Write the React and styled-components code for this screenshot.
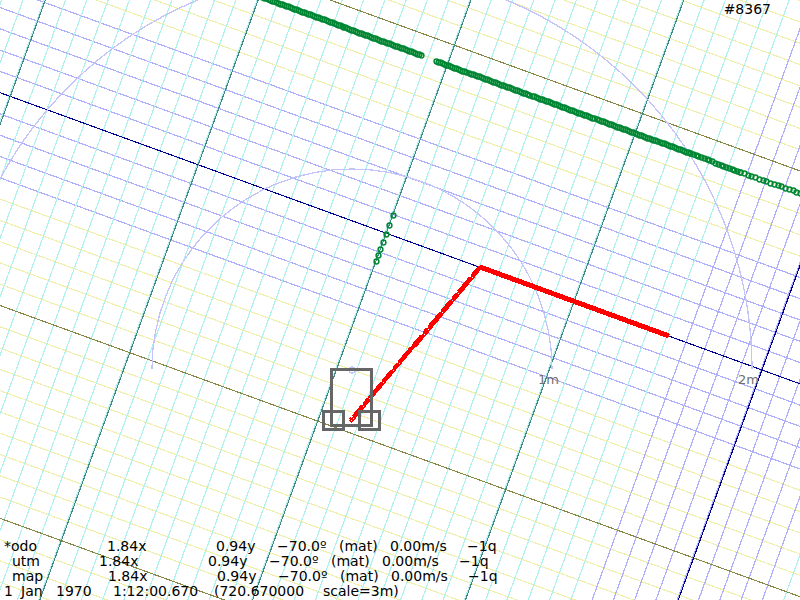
import React from "react";
import styled, { createGlobalStyle } from "styled-components";

const GlobalStyle = createGlobalStyle`
  body {
    margin: 0;
    background: #ffffff;
    overflow: hidden;
  }
`;

const Viewport = styled.main`
  position: relative;
  min-height: 100vh;
  display: flex;
  flex-direction: column;
  justify-content: space-between;
  overflow: hidden;
  color: #000000;
  font-family: "DejaVu Sans", sans-serif;
  font-size: 14px;
  line-height: 15px;
`;

const MapCanvas = styled.svg`
  position: absolute;
  top: 0;
  left: 0;
  width: 800px;
  height: 600px;
`;

const ScaleLabel = styled.text`
  font-size: 13px;
  fill: #707070;
`;

const FrameCounter = styled.header`
  position: relative;
  align-self: flex-end;
  padding: 2px 29px 0 0;
`;

const StatusPanel = styled.footer`
  position: relative;
  padding: 0 0 1px 4px;
`;

const PoseRow = styled.div`
  display: grid;
  grid-template-columns: ${(p) => p.$lead}px 109px 61px 62px 51px 77px auto;
  justify-content: start;
  white-space: nowrap;
`;

const Frame = styled.span`
  padding-left: ${(p) => (p.$active ? 0 : 8)}px;
`;

const Clock = styled.div`
  display: grid;
  grid-template-columns: 17px 35px 57px 101px 109px auto;
  justify-content: start;
  white-space: nowrap;
`;

const ORIGIN = { x: 762, y: 370 };
const STEP = 20;
const range = (from, to) => Array.from({ length: to - from + 1 }, (_, i) => from + i);

const rowColor = (i) => (i >= -5 && i <= 4 ? "#b0b0fa" : "#efefb0");
const columnColor = (i) => (Math.abs(i) <= 4 ? "#b0b0fa" : "#b0f0ee");

function Grid() {
  return (
    <g transform={`translate(${ORIGIN.x} ${ORIGIN.y}) rotate(20)`} shapeRendering="crispEdges">
      <g strokeWidth="1.2">
        {range(-30, 30).map((i) => (
          <line key={`r${i}`} x1="-1000" x2="400" y1={i * STEP} y2={i * STEP} stroke={rowColor(i)} />
        ))}
        {range(-45, 15).map((i) => (
          <line key={`c${i}`} y1="-700" y2="700" x1={i * STEP - 1} x2={i * STEP - 1} stroke={columnColor(i)} />
        ))}
      </g>
      <g strokeWidth="1.1">
        {range(-3, 3).map((i) => (
          <line key={`R${i}`} x1="-1000" x2="400" y1={i * 200} y2={i * 200} stroke={i ? "#87874a" : "#000090"} />
        ))}
        {range(-4, 1).map((i) => (
          <line key={`C${i}`} y1="-700" y2="700" x1={i * 200} x2={i * 200} stroke={i ? "#468787" : "#000090"} />
        ))}
      </g>
    </g>
  );
}

function dots(x1, y1, x2, y2, count) {
  return range(0, count).map((i) => [
    Math.round(x1 + ((x2 - x1) * i) / count),
    Math.round(y1 + ((y2 - y1) * i) / count),
  ]);
}

const wallPoints = [
  ...dots(262, -3, 421, 55, 80),
  ...dots(436, 61, 690, 153, 125),
  ...dots(690, 153, 740, 172, 18),
  ...dots(740, 172, 800, 193, 16),
  [393, 215], [389, 225], [386, 234], [383, 242], [380, 249], [378, 255], [376, 261],
];

const pathPoints = dots(351, 420, 480, 267, 64);

function Map() {
  return (
    <MapCanvas viewBox="0 0 800 600" aria-label="Robot map">
      <Grid />
      <g fill="none" stroke="#c4c4fa" strokeWidth="1.3" shapeRendering="crispEdges">
        <path d="M152 369A200 200 0 0 1 552 369" />
        <path d="M-48 369A400 400 0 0 1 752 369" />
        <circle cx="352" cy="370" r="3" />
      </g>
      <g fill="none" stroke="#008734" strokeWidth="1.5">
        {wallPoints.map(([x, y], i) => (
          <circle key={i} cx={x + 0.5} cy={y + 0.5} r="2.4" />
        ))}
      </g>
      <g fill="none" stroke="#ff0000" shapeRendering="crispEdges">
        {pathPoints.map(([x, y], i) => (
          <circle key={i} cx={x + 0.5} cy={y + 0.5} r="1.5" strokeWidth="1.2" />
        ))}
        <path d="M351 420L480 267" strokeWidth="4.4" strokeDasharray="14 3 6 2 19 2" strokeDashoffset="-4" />
        <path d="M480 267L669 336" strokeWidth="5" />
      </g>
      <g fill="none" stroke="#666666" strokeWidth="3" shapeRendering="crispEdges">
        <rect x="331.5" y="369.5" width="40" height="56" />
        <rect x="323.5" y="411.5" width="20" height="18" />
        <rect x="359.5" y="411.5" width="20" height="18" />
      </g>
      <ScaleLabel x="538" y="384">1m</ScaleLabel>
      <ScaleLabel x="738" y="384">2m</ScaleLabel>
    </MapCanvas>
  );
}

const poses = [
  { frame: "*odo", lead: 103, active: true },
  { frame: "utm", lead: 95 },
  { frame: "map", lead: 104 },
];

export default function App() {
  return (
    <>
      <GlobalStyle />
      <Viewport>
        <Map />
        <FrameCounter>#8367</FrameCounter>
        <StatusPanel>
          {poses.map((p) => (
            <PoseRow key={p.frame} $lead={p.lead}>
              <Frame $active={p.active}>{p.frame}</Frame>
              <span>1.84x</span>
              <span>0.94y</span>
              <span>−70.0º</span>
              <span>(mat)</span>
              <span>0.00m/s</span>
              <span>−1q</span>
            </PoseRow>
          ))}
          <Clock>
            <span>1</span>
            <span>Jan</span>
            <span>1970</span>
            <span>1:12:00.670</span>
            <span>(720.670000</span>
            <span>scale=3m)</span>
          </Clock>
        </StatusPanel>
      </Viewport>
    </>
  );
}
